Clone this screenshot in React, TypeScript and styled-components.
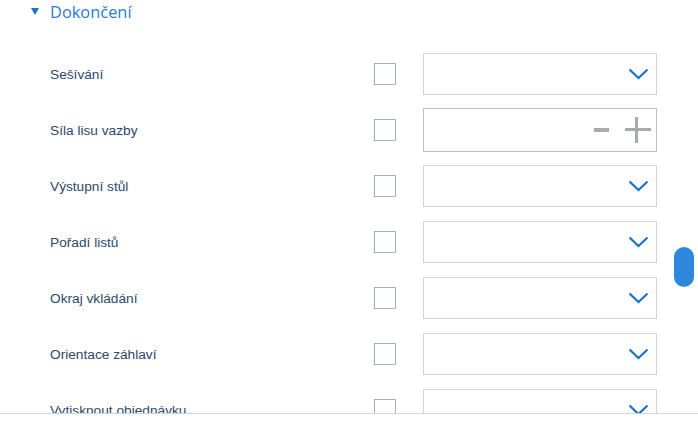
import React from "react";
import styled, { createGlobalStyle } from "styled-components";

const Global = createGlobalStyle`
  html, body { margin: 0; padding: 0; background: #ffffff; overflow: hidden; }
  * { box-sizing: border-box; }
`;

const Panel = styled.div`
  display: flex;
  width: 698px;
  height: 414px;
  overflow: hidden;
  border-bottom: 1px solid #d4d4d4;
`;

const Content = styled.div`
  flex: 1;
  display: flex;
  flex-direction: column;
`;

const Header = styled.div`
  display: flex;
  align-items: center;
  height: 25px;
  padding-left: 31px;
  gap: 11px;
`;

const Caret = styled.span`
  width: 0;
  height: 0;
  border-left: 4px solid transparent;
  border-right: 4px solid transparent;
  border-top: 7px solid #1f6fc2;
  margin-top: -1px;
`;

const Title = styled.span`
  font-family: "Open Sans", "Noto Sans", sans-serif;
  font-size: 16.4px;
  color: #2a7bd2;
  line-height: 24px;
`;

const List = styled.div`
  display: flex;
  flex-direction: column;
  padding-top: 22px;
`;

const Row = styled.div`
  display: grid;
  grid-template-columns: 324px 49px 234px;
  align-items: center;
  height: 56px;
  padding-left: 50px;
  flex-shrink: 0;
`;

const Label = styled.span`
  font-family: "Liberation Sans", Arial, sans-serif;
  font-size: 13.7px;
  color: #2b496b;
`;

const Check = styled.span`
  width: 22px;
  height: 22px;
  border: 1px solid #a9b1b1;
  background: #fff;
`;

const Select = styled.div`
  height: 42px;
  border: 1px solid #d3d3d3;
  display: flex;
  align-items: center;
  justify-content: flex-end;
  padding-right: 7px;
`;

const Spin = styled.div`
  height: 44px;
  border: 1px solid #bfbfbf;
  display: flex;
  align-items: center;
  justify-content: flex-end;
  padding-right: 5px;
  gap: 16px;
`;

const Minus = styled.span`
  width: 15px;
  height: 4px;
  background: #a7abab;
`;

const Plus = styled.span`
  position: relative;
  width: 26px;
  height: 26px;
  &::before, &::after {
    content: "";
    position: absolute;
    background: #a7abab;
  }
  &::before { left: 0; right: 0; top: 11px; height: 3px; }
  &::after { top: 0; bottom: 0; left: 10px; width: 3px; }
`;

const Track = styled.div`
  width: 28px;
  padding-left: 4px;
`;

const Thumb = styled.div`
  width: 20px;
  height: 40px;
  margin-top: 247px;
  border-radius: 10px;
  background: #2d87dd;
`;

const Chevron = () => (
  <svg width="21" height="12" viewBox="0 0 21 12" fill="none">
    <path d="M1.5 1.5 L10.5 10 L19.5 1.5" stroke="#1a72c9" strokeWidth="2.2" />
  </svg>
);

type Item = { label: string; kind: "select" | "spin" };

const items: Item[] = [
  { label: "Sešívání", kind: "select" },
  { label: "Síla lisu vazby", kind: "spin" },
  { label: "Výstupní stůl", kind: "select" },
  { label: "Pořadí listů", kind: "select" },
  { label: "Okraj vkládání", kind: "select" },
  { label: "Orientace záhlaví", kind: "select" },
  { label: "Vytisknout objednávku", kind: "select" },
];

export default function App() {
  return (
    <>
      <Global />
      <Panel>
        <Content>
          <Header>
            <Caret />
            <Title>Dokončení</Title>
          </Header>
          <List>
            {items.map((it) => (
              <Row key={it.label}>
                <Label>{it.label}</Label>
                <Check />
                {it.kind === "select" ? (
                  <Select>
                    <Chevron />
                  </Select>
                ) : (
                  <Spin>
                    <Minus />
                    <Plus />
                  </Spin>
                )}
              </Row>
            ))}
          </List>
        </Content>
        <Track>
          <Thumb />
        </Track>
      </Panel>
    </>
  );
}
